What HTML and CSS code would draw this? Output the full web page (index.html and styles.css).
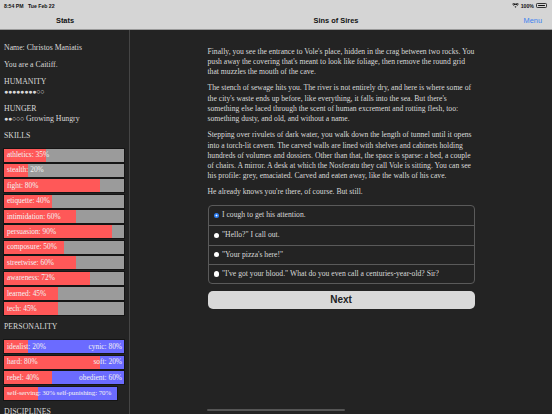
FILE: index.html
```html
<!DOCTYPE html>
<html>
<head>
<meta charset="utf-8">
<link rel="stylesheet" href="styles.css">
</head>
<body>
<header class="topbar">
  <div class="status">
    <span class="time">8:54 PM&nbsp;&nbsp;&nbsp;Tue Feb 22</span>
    <span class="sys">
      <svg class="wifi" viewBox="0 0 12 9" width="7" height="5"><path d="M6 8.6 4.2 6.6a2.6 2.6 0 0 1 3.6 0Z M2.6 5 1.4 3.7a6.6 6.6 0 0 1 9.2 0L9.4 5a4.9 4.9 0 0 0-6.8 0Z" fill="#111"/><path d="M.2 2.2a8.6 8.6 0 0 1 11.6 0" stroke="#111" stroke-width="1.4" fill="none"/></svg>
      <span class="pct">100%</span>
      <span class="battery"><span class="level"></span></span>
    </span>
  </div>
  <div class="nav">
    <div class="nav-side">Stats</div>
    <div class="nav-main">
      <span></span>
      <span class="title">Sins of Sires</span>
      <span class="menu">Menu</span>
    </div>
  </div>
</header>
<div class="app">
  <aside class="sidebar">
    <p>Name: Christos Maniatis</p>
    <p>You are a Caitiff.</p>
    <p>HUMANITY<br><span class="dots">●●●●●●●●○○</span></p>
    <p>HUNGER<br><span class="dots">●●○○○</span> Growing Hungry</p>
    <p>SKILLS</p>
    <div class="bars">
      <div class="bar"><div class="fill" style="width:35%"></div><span class="lbl">athletics: 35%</span></div>
      <div class="bar"><div class="fill" style="width:20%"></div><span class="lbl">stealth: 20%</span></div>
      <div class="bar"><div class="fill" style="width:80%"></div><span class="lbl">fight: 80%</span></div>
      <div class="bar"><div class="fill" style="width:40%"></div><span class="lbl">etiquette: 40%</span></div>
      <div class="bar"><div class="fill" style="width:60%"></div><span class="lbl">intimidation: 60%</span></div>
      <div class="bar"><div class="fill" style="width:90%"></div><span class="lbl">persuasion: 90%</span></div>
      <div class="bar"><div class="fill" style="width:50%"></div><span class="lbl">composure: 50%</span></div>
      <div class="bar"><div class="fill" style="width:60%"></div><span class="lbl">streetwise: 60%</span></div>
      <div class="bar"><div class="fill" style="width:72%"></div><span class="lbl">awareness: 72%</span></div>
      <div class="bar"><div class="fill" style="width:45%"></div><span class="lbl">learned: 45%</span></div>
      <div class="bar"><div class="fill" style="width:45%"></div><span class="lbl">tech: 45%</span></div>
    </div>
    <p class="sect">PERSONALITY</p>
    <div class="bars">
      <div class="bar pair"><div class="fill" style="width:20%"></div><span class="lbl">idealist: 20%</span><span class="rlbl">cynic: 80%</span></div>
      <div class="bar pair"><div class="fill" style="width:80%"></div><span class="lbl">hard: 80%</span><span class="rlbl">soft: 20%</span></div>
      <div class="bar pair"><div class="fill" style="width:40%"></div><span class="lbl">rebel: 40%</span><span class="rlbl">obedient: 60%</span></div>
      <div class="bar pair short"><div class="fill" style="width:30%"></div><span class="lbl">self-serving: 30% self-punishing: 70%</span></div>
    </div>
    <p class="sect">DISCIPLINES</p>
  </aside>
  <main class="main">
    <div class="story">
      <p>Finally, you see the entrance to Vole's place, hidden in the crag between two rocks. You push away the covering that's meant to look like foliage, then remove the round grid that muzzles the mouth of the cave.</p>
      <p>The stench of sewage hits you. The river is not entirely dry, and here is where some of the city's waste ends up before, like everything, it falls into the sea. But there's something else laced through the scent of human excrement and rotting flesh, too: something dusty, and old, and without a name.</p>
      <p>Stepping over rivulets of dark water, you walk down the length of tunnel until it opens into a torch-lit cavern. The carved walls are lined with shelves and cabinets holding hundreds of volumes and dossiers. Other than that, the space is sparse: a bed, a couple of chairs. A mirror. A desk at which the Nosferatu they call Vole is sitting. You can see his profile: grey, emaciated. Carved and eaten away, like the walls of his cave.</p>
      <p>He already knows you're there, of course. But still.</p>
      <div class="choices">
        <label class="choice"><span class="radio on"></span>I cough to get his attention.</label>
        <label class="choice"><span class="radio"></span>"Hello?" I call out.</label>
        <label class="choice"><span class="radio"></span>"Your pizza's here!"</label>
        <label class="choice"><span class="radio"></span>"I've got your blood." What do you even call a centuries-year-old? Sir?</label>
      </div>
      <button class="next">Next</button>
    </div>
    <div class="scroll"></div>
  </main>
</div>
</body>
</html>
```
FILE: styles.css
```css
* { box-sizing: border-box; }
html, body { margin: 0; padding: 0; }
body {
  width: 552px;
  height: 414px;
  overflow: hidden;
  background: #232323;
  color: #d9d9d9;
  font-family: "Liberation Serif", "Times New Roman", serif;
}
.topbar {
  height: 30px;
  background: #d5d5d5;
  border-bottom: 1px solid #9a9a9a;
  font-family: "Liberation Sans", Arial, sans-serif;
  color: #111;
}
.status {
  height: 11px;
  display: flex;
  justify-content: space-between;
  align-items: center;
  padding: 0 5px 0 4px;
  font-size: 5.2px;
  font-weight: bold;
}
.sys { display: flex; align-items: center; gap: 2px; }
.battery {
  width: 11px; height: 5px;
  border: 0.6px solid #333;
  border-radius: 1.3px;
  padding: 0.6px;
  display: flex;
}
.battery .level { flex: 1; background: #111; border-radius: 0.6px; }
.nav {
  height: 19px;
  display: grid;
  grid-template-columns: 130px 1fr;
  align-items: center;
  font-size: 7.4px;
  font-weight: bold;
}
.nav-side { text-align: center; }
.nav-main {
  display: grid;
  grid-template-columns: 1fr auto 1fr;
  align-items: center;
  padding-right: 10px;
}
.menu { justify-self: end; color: #3b82f0; font-weight: normal; }
.app {
  display: grid;
  grid-template-columns: 130px 1fr;
  height: 384px;
}
.sidebar {
  border-right: 1px solid #454545;
  padding: 12.5px 5px 0 4px;
  font-size: 7.8px;
  line-height: 10px;
  overflow: hidden;
}
.sidebar p { margin: 0 0 7px; }
.dots { font-size: 7px; letter-spacing: -0.2px; }
.bars {
  display: flex;
  flex-direction: column;
  gap: 2.4px;
  margin-top: 8px;
  width: 120px;
}
.bar {
  position: relative;
  height: 13px;
  background: #9b9b9b;
  outline: 1px solid #151515;
  display: flex;
  align-items: center;
  color: #f2f2f2;
  font-size: 7.4px;
}
.bar .fill {
  position: absolute;
  left: 0; top: 0; bottom: 0;
  background: #ff5858;
}
.bar .lbl { position: relative; padding-left: 3px; white-space: nowrap; }
.bar .rlbl { position: relative; margin-left: auto; padding-right: 2px; white-space: nowrap; }
.bar.pair { background: #6b6bff; }
.bar.short { width: 113px; font-size: 7px; letter-spacing: -0.1px; }
.sidebar .sect { margin-top: 7px; margin-bottom: 0; }
.main {
  display: flex;
  flex-direction: column;
  align-items: center;
}
.story {
  width: 267px;
  padding-top: 16.8px;
  font-size: 7.65px;
  line-height: 10.3px;
}
.story p { margin: 0 0 5.7px; }
.choices {
  margin-top: 7px;
  border: 1px solid #5a5a5a;
  border-radius: 4px;
}
.choice {
  height: 19.4px;
  display: flex;
  align-items: center;
  padding-left: 5px;
  border-top: 1px solid #5a5a5a;
}
.choice:first-child { border-top: none; }
.radio {
  width: 5.5px; height: 5.5px;
  border-radius: 50%;
  background: #fff;
  margin-right: 3px;
  flex: none;
}
.radio.on {
  background: radial-gradient(circle, #fff 0 0.8px, #2f7ff2 1.1px);
}
.next {
  display: block;
  width: 100%;
  height: 18px;
  margin-top: 6.5px;
  border: none;
  border-radius: 5px;
  background: #d9d9d9;
  color: #222;
  font-family: "Liberation Sans", Arial, sans-serif;
  font-weight: bold;
  font-size: 10px;
  padding: 0;
}
.scroll {
  margin-top: auto;
  margin-bottom: 3px;
  align-self: flex-start;
  margin-left: 77px;
  width: 138px;
  height: 2px;
  border-radius: 1px;
  background: #555;
}
```
